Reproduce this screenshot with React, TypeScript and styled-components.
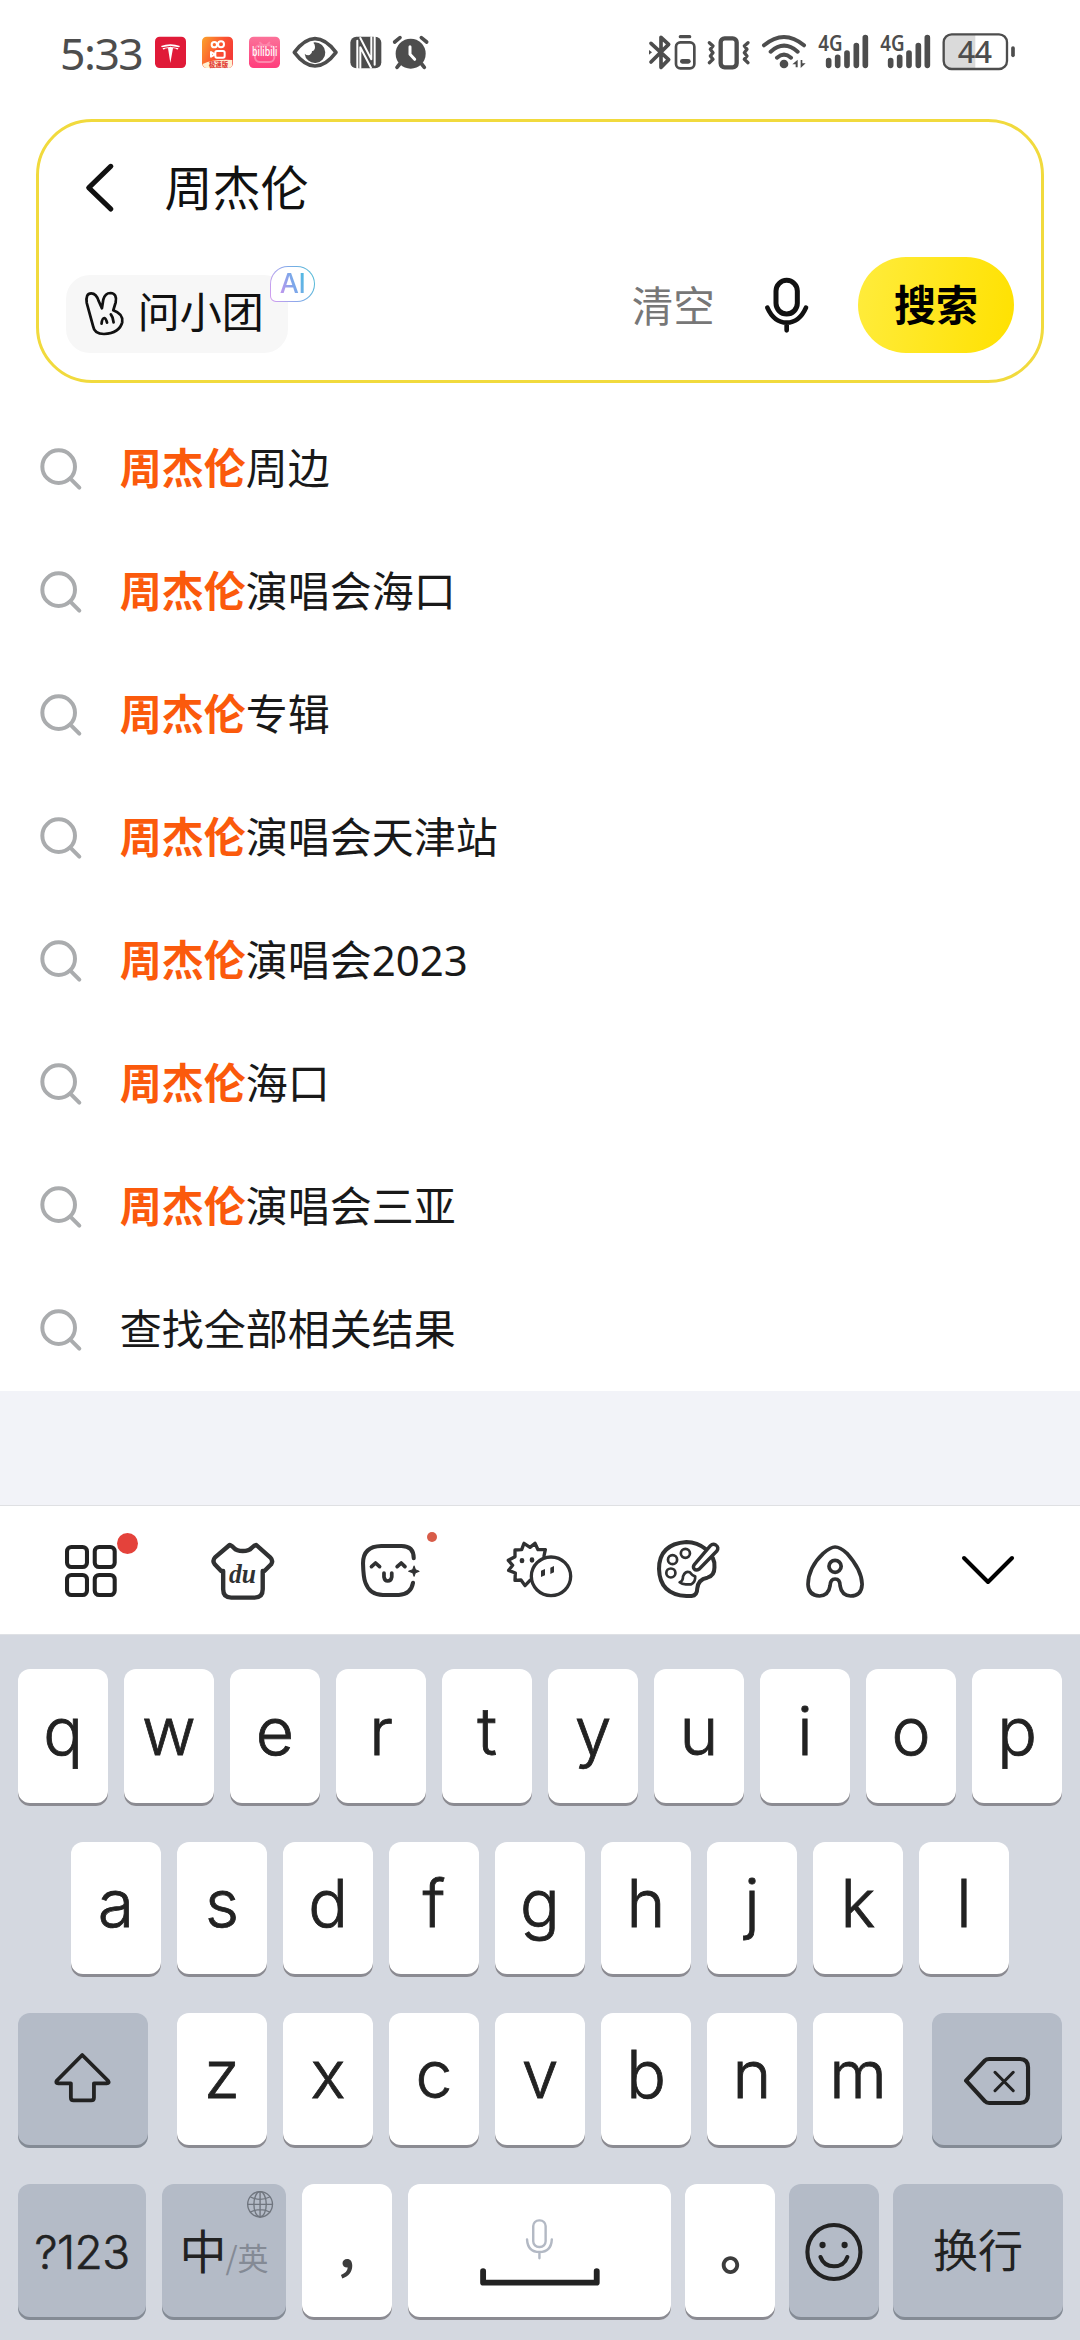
import React from 'react';
import styled, { createGlobalStyle, css } from 'styled-components';

const CJK = `'Noto Sans CJK SC', 'Noto Sans', sans-serif`;
const INK = '#222222';
const STATUS = '#4d4d4d';

const GlobalStyle = createGlobalStyle`
  * { box-sizing: border-box; }
  body { margin: 0; background: #fff; }
  svg { display: block; flex: none; overflow: visible; }
`;

const Screen = styled.div`
  width: 1080px;
  height: 2340px;
  display: flex;
  flex-direction: column;
  overflow: hidden;
  background: #fff;
  font-family: ${CJK};
  color: #111;
`;

/* ---------- drawing helper ---------- */

type ArtProps = {
  x: number;
  y: number;
  w: number;
  h: number;
  sx?: number;
  color?: string;
  line?: number;
  children: React.ReactNode;
};

const Art = ({ x, y, w, h, sx = 3, color = INK, line = 12, children }: ArtProps) => (
  <svg
    width={w / sx}
    height={h / 3}
    viewBox={`${x} ${y} ${w} ${h}`}
    preserveAspectRatio="none"
    fill="none"
    stroke={color}
    strokeWidth={line}
    strokeLinecap="round"
    strokeLinejoin="round"
  >
    {children}
  </svg>
);

/* ---------- status bar ---------- */

const StatusBar = styled.header`
  height: 119px;
  flex: none;
  display: flex;
  justify-content: space-between;
  padding: 20px 60px 0 60px;
`;

const StatusGroup = styled.div`
  display: flex;
  height: 70px;
`;

const Clock = styled.time`
  width: 85px;
  font: 450 44.5px/66px 'Noto Sans', sans-serif;
  letter-spacing: -1.5px;
  color: ${STATUS};
  white-space: nowrap;
`;

const StatusArt = ({ x, w, children }: { x: number; w: number; children: React.ReactNode }) => (
  <Art x={x} y={0} w={w} h={210} color={STATUS} line={10}>
    {children}
  </Art>
);

const Signal = () => (
  <StatusArt x={545} w={186}>
    <text
      x="564"
      y="93"
      fill={STATUS}
      stroke="none"
      fontFamily="Noto Sans"
      fontWeight="600"
      fontSize="63"
      textLength="73"
      lengthAdjust="spacingAndGlyphs"
    >
      4G
    </text>
    <path strokeWidth="17" d="M595 122V136M622 112V136M650 99V136M678 77V136M705 53V136" />
  </StatusArt>
);

const Status = () => (
  <StatusBar>
    <StatusGroup>
      <Clock>5:33</Clock>
      <StatusArt x={315} w={147}>
        <rect x="345" y="50" width="93" height="94" rx="14" fill="#e01a38" stroke="none" />
        <path
          d="M363 78Q391 68 420 78L412 89Q406 84 399 85L391 129L384 85Q377 84 371 89Z"
          fill="#fff"
          stroke="none"
        />
        <path d="M366 83Q391 75 416 83" stroke="#e01a38" strokeWidth="3" />
      </StatusArt>
      <StatusArt x={462} w={141}>
        <defs>
          <linearGradient id="video" x1="0" y1="0" x2="1" y2="0.5">
            <stop offset="0" stopColor="#fba42c" />
            <stop offset="0.6" stopColor="#fb5230" />
            <stop offset="1" stopColor="#f43a36" />
          </linearGradient>
        </defs>
        <rect x="486" y="50" width="93" height="94" rx="14" fill="url(#video)" stroke="none" />
        <g stroke="#fff" strokeWidth="6">
          <circle cx="523" cy="74" r="8" />
          <circle cx="543" cy="73" r="9" />
          <rect x="526" y="93" width="28" height="20" rx="5" />
          <path d="M513 96V110L525 103Z" />
        </g>
        <path d="M488 132Q520 117 577 120V132Q577 144 564 144H500Q490 144 488 132Z" fill="#fff0d2" stroke="none" />
        <text x="507" y="141" fill="#e2413a" stroke="none" fontFamily="Noto Sans CJK SC" fontWeight="900" fontSize="19">
          极速版
        </text>
      </StatusArt>
      <StatusArt x={603} w={135}>
        <defs>
          <linearGradient id="pink" x1="0" y1="0" x2="0" y2="1">
            <stop offset="0" stopColor="#fb7299" />
            <stop offset="1" stopColor="#ff3d7c" />
          </linearGradient>
        </defs>
        <rect x="627" y="50" width="93" height="94" rx="14" fill="url(#pink)" stroke="none" />
        <g stroke="#fd86ab" strokeWidth="6">
          <rect x="645" y="76" width="58" height="50" rx="14" />
          <path d="M660 68L667 75M688 68L681 75" />
        </g>
        <text
          x="636"
          y="109"
          fill="#fff"
          stroke="none"
          fontFamily="Noto Sans"
          fontWeight="500"
          fontSize="37"
          textLength="76"
          lengthAdjust="spacingAndGlyphs"
        >
          bilibili
        </text>
      </StatusArt>
      <StatusArt x={738} w={170}>
        <path strokeWidth="11" d="M763 97Q794 56 825 56Q857 56 888 97Q857 138 825 138Q794 138 763 97Z" />
        <path
          d="M824 67A31 31 0 1 1 794 101Q800 107 809 105Q817 101 816 94Q826 90 825 80Q825 73 820 68Z"
          fill={STATUS}
          stroke="none"
        />
      </StatusArt>
      <StatusArt x={908} w={134}>
        <rect x="930" y="50" width="93" height="95" rx="18" fill={STATUS} stroke="none" />
        <path d="M951 146V62M960 144V82L992 143" stroke="#fff" strokeWidth="6" />
        <path d="M1003 50V134M993 52V118L960 54" stroke="#fff" strokeWidth="6" />
      </StatusArt>
      <StatusArt x={1042} w={138}>
        <circle cx="1113" cy="101" r="45" fill={STATUS} stroke="none" />
        <path d="M1065 66L1081 53M1145 53L1161 66M1080 132L1072 142M1146 132L1154 142" strokeWidth="11" />
        <path d="M1111 80V103L1125 118" stroke="#fff" strokeWidth="9" />
      </StatusArt>
    </StatusGroup>
    <StatusGroup>
      <StatusArt x={45} w={82}>
        <path strokeWidth="11" d="M63 70L116 119L93 142V52L116 73L63 126" />
        <path d="M57 90L66 97L57 104Z" fill={STATUS} stroke="none" />
      </StatusArt>
      <StatusArt x={127} w={90}>
        <path d="M152 50H180" />
        <rect x="139" y="67" width="55" height="78" rx="13" strokeWidth="8" />
        <path d="M158 124H176" strokeWidth="14" />
      </StatusArt>
      <StatusArt x={217} w={161}>
        <rect x="273" y="55" width="48" height="87" rx="12" strokeWidth="13" />
        <path
          d="M239 68L250 78L242 88L250 98L242 108L250 118L239 128M355 68L344 78L352 88L344 98L352 108L344 118L355 128"
          strokeWidth="10"
        />
      </StatusArt>
      <StatusArt x={378} w={167}>
        <path strokeWidth="12" d="M402 76Q462 26 522 76M422 95Q462 59 503 95M441 113Q462 95 483 113" />
        <circle cx="462" cy="132" r="13" fill={STATUS} stroke="none" />
        <path d="M487 133L503 119V142H497V133ZM527 130L512 144V120H517V130Z" fill={STATUS} stroke="none" />
      </StatusArt>
      <Signal />
      <Signal />
      <StatusArt x={917} w={253}>
        <path d="M1035 43V148H964Q940 148 940 124V67Q940 43 964 43Z" fill="#dadada" stroke="none" />
        <rect x="940" y="43" width="190" height="104" rx="24" strokeWidth="7" />
        <path d="M1148 84V106" strokeWidth="11" />
        <text x="982" y="128" fill={STATUS} stroke="none" fontFamily="Noto Sans" fontWeight="500" fontSize="92" textLength="103">
          44
        </text>
      </StatusArt>
    </StatusGroup>
  </StatusBar>
);

/* ---------- search panel ---------- */

const SearchPanel = styled.section`
  flex: none;
  height: 264px;
  margin: 0 36px;
  padding: 36px 27px 0;
  border: 3px solid #f1da3d;
  border-radius: 56px;
`;

const QueryRow = styled.div`
  display: flex;
  align-items: center;
  gap: 51px;
  height: 60px;
  padding-left: 20px;
`;

const Query = styled.span`
  font-size: 48px;
  line-height: 60px;
  padding-bottom: 6px;
`;

const ActionRow = styled.div`
  display: flex;
  align-items: center;
  height: 96px;
  margin-top: 39px;
`;

const Assistant = styled.button`
  position: relative;
  align-self: flex-end;
  display: flex;
  align-items: center;
  gap: 11px;
  width: 222px;
  height: 78px;
  margin-right: auto;
  padding: 0 0 3px 18px;
  border: 0;
  border-radius: 24px;
  background: #f7f7f7;
  color: #111;
  font: 400 42px/60px ${CJK};
  white-space: nowrap;
`;

const AssistantName = styled.span`
  padding-bottom: 6px;
`;

const AiBadge = styled.span`
  position: absolute;
  left: 204px;
  top: -9px;
  width: 45px;
  height: 36px;
  display: flex;
  align-items: center;
  justify-content: center;
  border: 1.5px solid transparent;
  border-radius: 18px 18px 18px 6px;
  background: linear-gradient(#fff, #fff) padding-box,
    linear-gradient(70deg, #d79df0, #86a9ea 50%, #45bcd2) border-box;
`;

const AiLabel = styled.span`
  font: 500 27px/32px Inter, 'Liberation Sans', sans-serif;
  letter-spacing: -0.5px;
  background: linear-gradient(70deg, #cc93ee, #80a6ea 50%, #45bfe0);
  background-clip: text;
  -webkit-background-clip: text;
  color: transparent;
`;

const Clear = styled.span`
  font-size: 41.5px;
  line-height: 60px;
  padding-bottom: 2px;
  color: #777;
  margin-right: 50px;
`;

const SearchButton = styled.button`
  width: 156px;
  height: 96px;
  margin-left: 50px;
  padding: 0 0 4px;
  border: 0;
  border-radius: 48px;
  background: linear-gradient(100deg, #ffec3d, #ffe100);
  color: #000;
  font: 700 42px/60px ${CJK};
`;

const Search = () => (
  <SearchPanel>
    <QueryRow>
      <Art x={192} y={163} w={80} h={142} sx={2.904} color="#111" line={15}>
        <path d="M264 170L200 234L264 298" />
      </Art>
      <Query>周杰伦</Query>
    </QueryRow>
    <ActionRow>
      <Assistant>
        <Art x={187} y={540} w={124} h={144} sx={2.904} color="#111" line={8}>
          <path d="M213 650L195 582Q191 553 208 553Q223 553 230 577L239 598L243 572Q248 552 264 552Q284 554 279 580L272 604Q302 615 298 640Q290 672 245 675Q217 675 213 650Z" />
          <path d="M238 644Q240 627 246 627Q251 628 254 641M265 616Q272 625 273 640" />
        </Art>
        <AssistantName>问小团</AssistantName>
        <AiBadge>
          <AiLabel>AI</AiLabel>
        </AiBadge>
      </Assistant>
      <Clear>清空</Clear>
      <Art x={613} y={503} w={130} h={164} color="#111" line={14}>
        <rect x="646" y="510" width="64" height="101" rx="32" strokeWidth="15" />
        <path d="M620 592Q640 637 678 637Q716 637 736 592M678 637V660" />
      </Art>
      <SearchButton>搜索</SearchButton>
    </ActionRow>
  </SearchPanel>
);

/* ---------- suggestions ---------- */

const List = styled.ul`
  flex: none;
  height: 1008px;
  margin: 0;
  padding: 24px 40px 0;
  list-style: none;
`;

const Item = styled.li`
  display: flex;
  align-items: center;
  gap: 38px;
  height: 123px;
  font: 400 42px/60px 'Noto Sans', 'Noto Sans CJK SC', sans-serif;
  color: #191919;
`;

const ItemText = styled.span`
  padding-bottom: 1px;
`;

const Hit = styled.b`
  font-weight: 700;
  color: #fb5a0c;
`;

const suggestions = [
  { hit: true, rest: '周边' },
  { hit: true, rest: '演唱会海口' },
  { hit: true, rest: '专辑' },
  { hit: true, rest: '演唱会天津站' },
  { hit: true, rest: '演唱会2023' },
  { hit: true, rest: '海口' },
  { hit: true, rest: '演唱会三亚' },
  { hit: false, rest: '查找全部相关结果' },
];

const Suggestions = () => (
  <List>
    {suggestions.map(({ hit, rest }) => (
      <Item key={rest}>
        <Art x={60} y={83} w={125} h={125} color="#aaacae" line={12}>
          <circle cx="116" cy="139" r="49" />
          <path d="M151 175L178 202" />
        </Art>
        <ItemText>
          {hit && <Hit>周杰伦</Hit>}
          {rest}
        </ItemText>
      </Item>
    ))}
  </List>
);

const Filler = styled.div`
  flex: none;
  height: 115px;
  background: #f2f3f8;
  border-bottom: 1px solid #dfe0e3;
`;

/* ---------- keyboard toolbar ---------- */

const Toolbar = styled.nav`
  flex: none;
  display: grid;
  grid-template-columns: 150px 154px 141px 156px 142px 152px 154px;
  align-items: center;
  justify-items: center;
  height: 128px;
  padding: 0 0 0 16px;
  background: #fff;
`;

const Tool = styled.span<{ $drop?: number }>`
  position: relative;
  top: ${({ $drop = 0 }) => $drop}px;
`;

const Dot = styled.i<{ $size: number; $left: number; $top: number; $color: string }>`
  position: absolute;
  left: ${({ $left }) => $left}px;
  top: ${({ $top }) => $top}px;
  width: ${({ $size }) => $size}px;
  height: ${({ $size }) => $size}px;
  border-radius: 50%;
  background: ${({ $color }) => $color};
`;

const SX = 2.958;
const DARK = '#303132';

const Tools = () => (
  <Toolbar>
    <Tool $drop={1}>
      <Art x={104} y={165} w={153} h={156} sx={SX}>
        <rect x="110" y="171" width="59" height="60" rx="13" />
        <rect x="192" y="171" width="59" height="60" rx="13" />
        <rect x="110" y="255" width="59" height="60" rx="13" />
        <rect x="192" y="255" width="59" height="60" rx="13" />
      </Art>
      <Dot $size={21} $left={52} $top={-12} $color="#e4423b" />
    </Tool>
    <Tool $drop={1.5}>
      <Art x={536} y={159} w={188} h={171} sx={SX} color={DARK} line={13}>
        <path d="M591 165Q595 165 604 174Q612 183 630 183Q648 183 656 174Q665 165 670 165L711 202Q721 212 714 223L694 243H689V298Q689 323 665 323H596Q572 323 572 298V243H566L547 223Q539 212 548 202Z" />
        <text
          x="589"
          y="279"
          fill={DARK}
          stroke="none"
          fontFamily="Liberation Serif"
          fontStyle="italic"
          fontWeight="700"
          fontSize="84"
          textLength="80"
          lengthAdjust="spacingAndGlyphs"
        >
          du
        </text>
      </Art>
    </Tool>
    <Tool>
      <Art x={980} y={162} w={172} h={159} sx={SX} color={DARK}>
        <path d="M1136 205Q1136 168 1100 168H1040Q986 169 986 220Q987 262 993 278Q1006 315 1045 315H1092Q1128 313 1134 278" />
        <path
          d="M1011 230L1023 219L1035 230M1087 230L1099 219L1110 230M1048 249V261Q1050 273 1059 273Q1069 273 1071 261V249"
          strokeWidth="11"
        />
        <path
          d="M1137 228L1141 239L1152 244L1141 248L1137 259L1133 248L1121 244L1133 239Z"
          fill={DARK}
          stroke={DARK}
          strokeWidth="3"
        />
      </Art>
      <Dot $size={10} $left={66} $top={-12} $color="#d85c49" />
    </Tool>
    <Tool>
      <Art x={50} y={42} w={195} h={166} color={DARK} line={10}>
        <path d="M161 84L165 65L143 65L134 46L119 58L101 46L94 65L74 66L74 86L54 97L67 112L55 127L75 135L74 157L92 156L104 173L119 157" />
        <ellipse cx="182" cy="145" rx="59" ry="58" />
        <path d="M95 97V99M125 95V97" strokeWidth="14" />
        <path d="M152 128L164 123V142L152 147ZM180 119L191 114V133L180 138Z" fill={DARK} stroke="none" />
      </Art>
    </Tool>
    <Tool $drop={-0.5}>
      <Art x={315} y={154} w={186} h={175} sx={SX} color={DARK}>
        <path d="M460 182Q434 160 402 160Q321 166 321 241Q323 318 402 322H417Q434 320 434 300Q436 272 464 267Q485 262 485 236Q487 222 480 208" />
        <circle cx="361" cy="213" r="13.5" strokeWidth="8" />
        <circle cx="399" cy="194" r="13.5" strokeWidth="8" />
        <circle cx="356" cy="253" r="13.5" strokeWidth="8" />
        <path
          d="M473 171Q480 164 489 169Q499 176 492 187L440 241Q431 247 425 241Q420 235 426 227Z"
          fill="#fff"
          strokeWidth="10"
        />
        <path d="M382 281Q392 278 392 263Q398 246 412 251Q420 262 428 263Q429 280 416 287H400Q389 287 382 281Z" strokeWidth="8" />
      </Art>
    </Tool>
    <Tool $drop={1}>
      <Art x={757} y={165} w={172} h={159} sx={SX} color={DARK} line={11}>
        <path d="M843 171Q858 171 878 190Q922 240 923 283Q921 318 889 318Q862 316 858 288Q858 267 843 267Q829 267 828 288Q824 316 797 318Q764 316 763 283Q764 232 808 190Q830 171 843 171Z" />
        <circle cx="843" cy="229" r="18" />
      </Art>
    </Tool>
    <Tool>
      <Art x={1219} y={201} w={154} h={85} sx={SX} color="#000">
        <path d="M1225 207L1296 279L1367 207" />
      </Art>
    </Tool>
  </Toolbar>
);

/* ---------- keyboard ---------- */

const Keyboard = styled.section`
  flex: 1;
  display: flex;
  flex-direction: column;
  gap: 36px;
  padding-top: 34px;
  border-top: 1px solid #dfe1e5;
  background: #d4d8e0;
`;

const KeyRow = styled.div<{ $h?: number }>`
  display: flex;
  justify-content: center;
  gap: 16px;
  height: ${({ $h = 135 }) => $h}px;
  flex: none;
`;

const BottomRow = styled(KeyRow)`
  justify-content: flex-start;
  padding-left: 18px;
  gap: 14px;
`;

const Key = styled.button<{ $w?: number; $fn?: boolean; $ml?: number; $mr?: number; $lift?: number }>`
  position: relative;
  flex: none;
  display: flex;
  align-items: center;
  justify-content: center;
  width: ${({ $w = 90 }) => $w}px;
  margin: 0 ${({ $mr = 0 }) => $mr}px 0 ${({ $ml = 0 }) => $ml}px;
  padding: 0 0 13px;
  border: 0;
  border-radius: 12px;
  background: #fff;
  box-shadow: inset 0 -3px 0 #8b8b92;
  color: ${INK};
  ${({ $fn, $lift = 3 }) =>
    $fn &&
    css`
      background: #b4bbc7;
      box-shadow: inset 0 -3px 0 #848b95;
      padding-bottom: ${$lift}px;
    `}
`;

const Letter = styled.span`
  font: 300 66px/80px Inter, 'Liberation Sans', sans-serif;
  -webkit-text-stroke: 0.8px ${INK};
`;

const Digits = styled.span`
  font: 300 46px/60px Inter, 'Liberation Sans', sans-serif;
  letter-spacing: -0.6px;
  -webkit-text-stroke: 0.6px ${INK};
`;

const Language = styled.span`
  display: flex;
  align-items: center;
  font: 400 47px/60px ${CJK};
  padding-bottom: 4px;
`;

const Alternate = styled.span`
  font-size: 31px;
  line-height: 60px;
  padding-top: 16px;
  margin-left: -1px;
  color: #848a95;
`;

const Globe = styled.span`
  position: absolute;
  right: 13px;
  top: 7px;
`;

const Punctuation = styled.span<{ $size: number; $x: number; $y: number; $weight?: number }>`
  font: ${({ $weight = 400 }) => $weight} ${({ $size }) => $size}px/60px ${CJK};
  color: #3c3c3c;
  position: relative;
  left: ${({ $x }) => $x}px;
  top: ${({ $y }) => $y}px;
`;

const SpaceContent = styled.span`
  display: flex;
  flex-direction: column;
  align-items: center;
  gap: 9px;
  padding-top: 13px;
`;

const Enter = styled.span`
  font: 400 45px/60px ${CJK};
  padding-bottom: 3px;
`;

const KX = 2.904;

const Keys = () => (
  <Keyboard>
    <KeyRow $h={137}>
      {[...'qwertyuiop'].map((c) => (
        <Key key={c}>
          <Letter>{c}</Letter>
        </Key>
      ))}
    </KeyRow>
    <KeyRow>
      {[...'asdfghjkl'].map((c) => (
        <Key key={c}>
          <Letter>{c}</Letter>
        </Key>
      ))}
    </KeyRow>
    <KeyRow>
      <Key $fn $w={130} $mr={13} $lift={5}>
        <Art x={160} y={188} w={166} h={148} sx={KX} line={11}>
          <path d="M242 194L168 271Q164 279 172 279H209V322Q209 330 217 330H268Q276 330 276 322V279H313Q322 279 317 271Z" />
        </Art>
      </Key>
      {[...'zxcvbnm'].map((c) => (
        <Key key={c}>
          <Letter>{c}</Letter>
        </Key>
      ))}
      <Key $fn $w={130} $ml={13} $lift={0}>
        <Art x={1231} y={201} w={192} h={144} sx={KX} line={12}>
          <path d="M1237 272L1292 211Q1296 207 1304 207H1394Q1417 208 1417 232V314Q1417 338 1394 339H1304Q1296 339 1292 334Z" />
          <path d="M1321 247L1374 302M1374 247L1321 302" strokeWidth="9" />
        </Art>
      </Key>
    </KeyRow>
    <BottomRow $h={136}>
      <Key $fn $w={128} $mr={2} $lift={0}>
        <Digits>?123</Digits>
      </Key>
      <Key $fn $w={124} $mr={2}>
        <Language>
          中<Alternate>/英</Alternate>
        </Language>
        <Globe>
          <Art x={717} y={604} w={76} h={80} sx={KX} color="#70767f" line={4}>
            <ellipse cx="755" cy="644" rx="36" ry="38" />
            <ellipse cx="755" cy="644" rx="18" ry="38" />
            <path d="M755 606V682M719 644H791M727 622Q755 636 783 622M727 667Q755 653 783 667" />
          </Art>
        </Globe>
      </Key>
      <Key $mr={2}>
        <Punctuation $size={54} $x={13} $y={3} $weight={500}>
          ，
        </Punctuation>
      </Key>
      <Key $w={263}>
        <SpaceContent>
          <Art x={609} y={684} w={78} h={121} sx={KX} color="#b3b9c4" line={7}>
            <rect x="630" y="688" width="36" height="80" rx="17" />
            <path d="M612 745Q614 783 648 783Q682 783 684 745M648 783V802" />
          </Art>
          <Art x={0} y={835} w={348} h={53} sx={KX} line={17}>
            <path d="M9 844V879H339V844" />
          </Art>
        </SpaceContent>
      </Key>
      <Key>
        <Punctuation $size={54} $x={17} $y={1} $weight={700}>
          。
        </Punctuation>
      </Key>
      <Key $fn $lift={0}>
        <Art x={771} y={699} w={167} h={174} sx={KX} line={12}>
          <ellipse cx="855" cy="786" rx="77" ry="81" />
          <path d="M816 801Q826 829 855 829Q885 829 894 801" />
          <ellipse cx="822" cy="765" rx="9" ry="9.5" fill={INK} stroke="none" />
          <ellipse cx="886" cy="765" rx="9" ry="9.5" fill={INK} stroke="none" />
        </Art>
      </Key>
      <Key $fn $w={170}>
        <Enter>换行</Enter>
      </Key>
    </BottomRow>
  </Keyboard>
);

export default function App() {
  return (
    <Screen>
      <GlobalStyle />
      <Status />
      <Search />
      <Suggestions />
      <Filler />
      <Tools />
      <Keys />
    </Screen>
  );
}
